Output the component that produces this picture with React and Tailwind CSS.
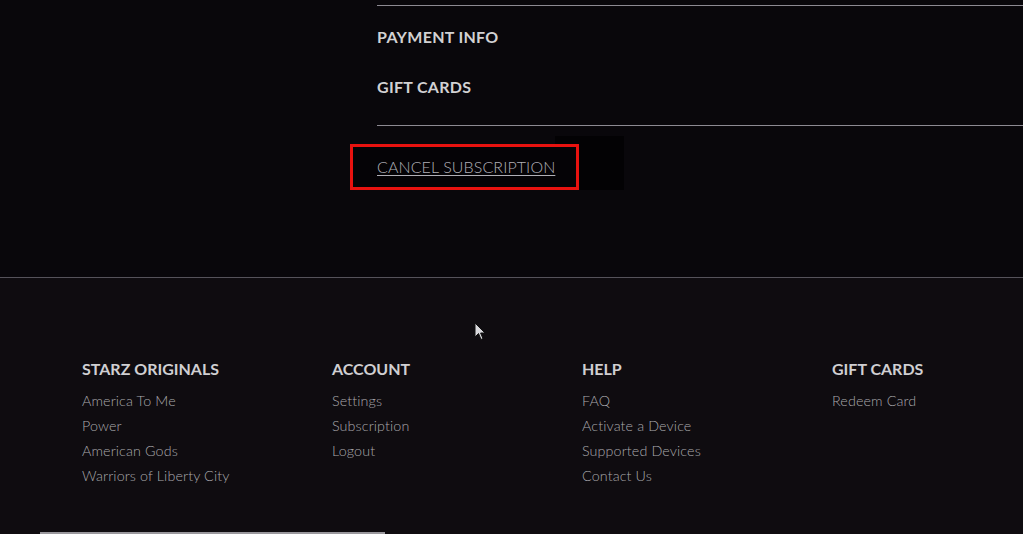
import React from "react";

const cols = [
  { title: "STARZ ORIGINALS", links: ["America To Me", "Power", "American Gods", "Warriors of Liberty City"] },
  { title: "ACCOUNT", links: ["Settings", "Subscription", "Logout"] },
  { title: "HELP", links: ["FAQ", "Activate a Device", "Supported Devices", "Contact Us"] },
  { title: "GIFT CARDS", links: ["Redeem Card"] },
];

export default function App() {
  return (
    <div className="relative w-[1023px] h-[534px] overflow-hidden bg-[#0f0c10]" style={{ fontFamily: "Lato, 'Open Sans', sans-serif" }}>
      <div className="relative h-[278px] bg-[#09070b] border-b border-[#55525a] pt-[5px]">
        <div className="absolute left-[555px] top-[136px] w-[69px] h-[54px] bg-[#030204]"></div>
        <div className="relative ml-[377px] border-t border-[#8d8a92]">
          <div className="h-[119px] flex flex-col">
            <div className="h-[50px] flex items-end pb-[7px] text-[16px] font-bold text-[#d2d1d3] tracking-[0.3px]">PAYMENT INFO</div>
            <div className="h-[50px] flex items-end pb-[7px] text-[16px] font-bold text-[#d2d1d3] tracking-[0.3px]">GIFT CARDS</div>
          </div>
          <div className="border-t border-[#8d8a92]"></div>
        </div>
        <div className="relative flex mt-[18px]">
          <div className="ml-[350px] w-[229px] h-[46px] border-[3px] border-[#e8120f] bg-[#050306] flex items-center pl-[24px]">
            <span className="text-[16px] font-light text-[#b0afb6] underline underline-offset-[2px] tracking-[0.1px]">CANCEL SUBSCRIPTION</span>
          </div>
        </div>
      </div>
      <div className="pl-[82px] pt-[80px] grid grid-cols-[250px_250px_250px_250px]">
        {cols.map((c) => (
          <div key={c.title} className="flex flex-col">
            <div className="text-[16px] font-bold text-[#d0cfd2] leading-[22px] mb-[8px]">{c.title}</div>
            {c.links.map((l) => (
              <div key={l} className="text-[14.3px] font-light text-[#a9a8ac] leading-[25px] tracking-[0.12px]">{l}</div>
            ))}
          </div>
        ))}
      </div>
      <div className="absolute left-[40px] bottom-0 w-[345px] h-[2px] bg-[#9a989d]"></div>
      <svg className="absolute left-[474px] top-[322px]" width="12" height="19" viewBox="0 0 12 19">
        <path d="M1 1 L1 15 L4.5 11.5 L7 17.5 L9 16.6 L6.6 11 L11 11 Z" fill="#d8d8dc" stroke="#111" strokeWidth="1" />
      </svg>
    </div>
  );
}
